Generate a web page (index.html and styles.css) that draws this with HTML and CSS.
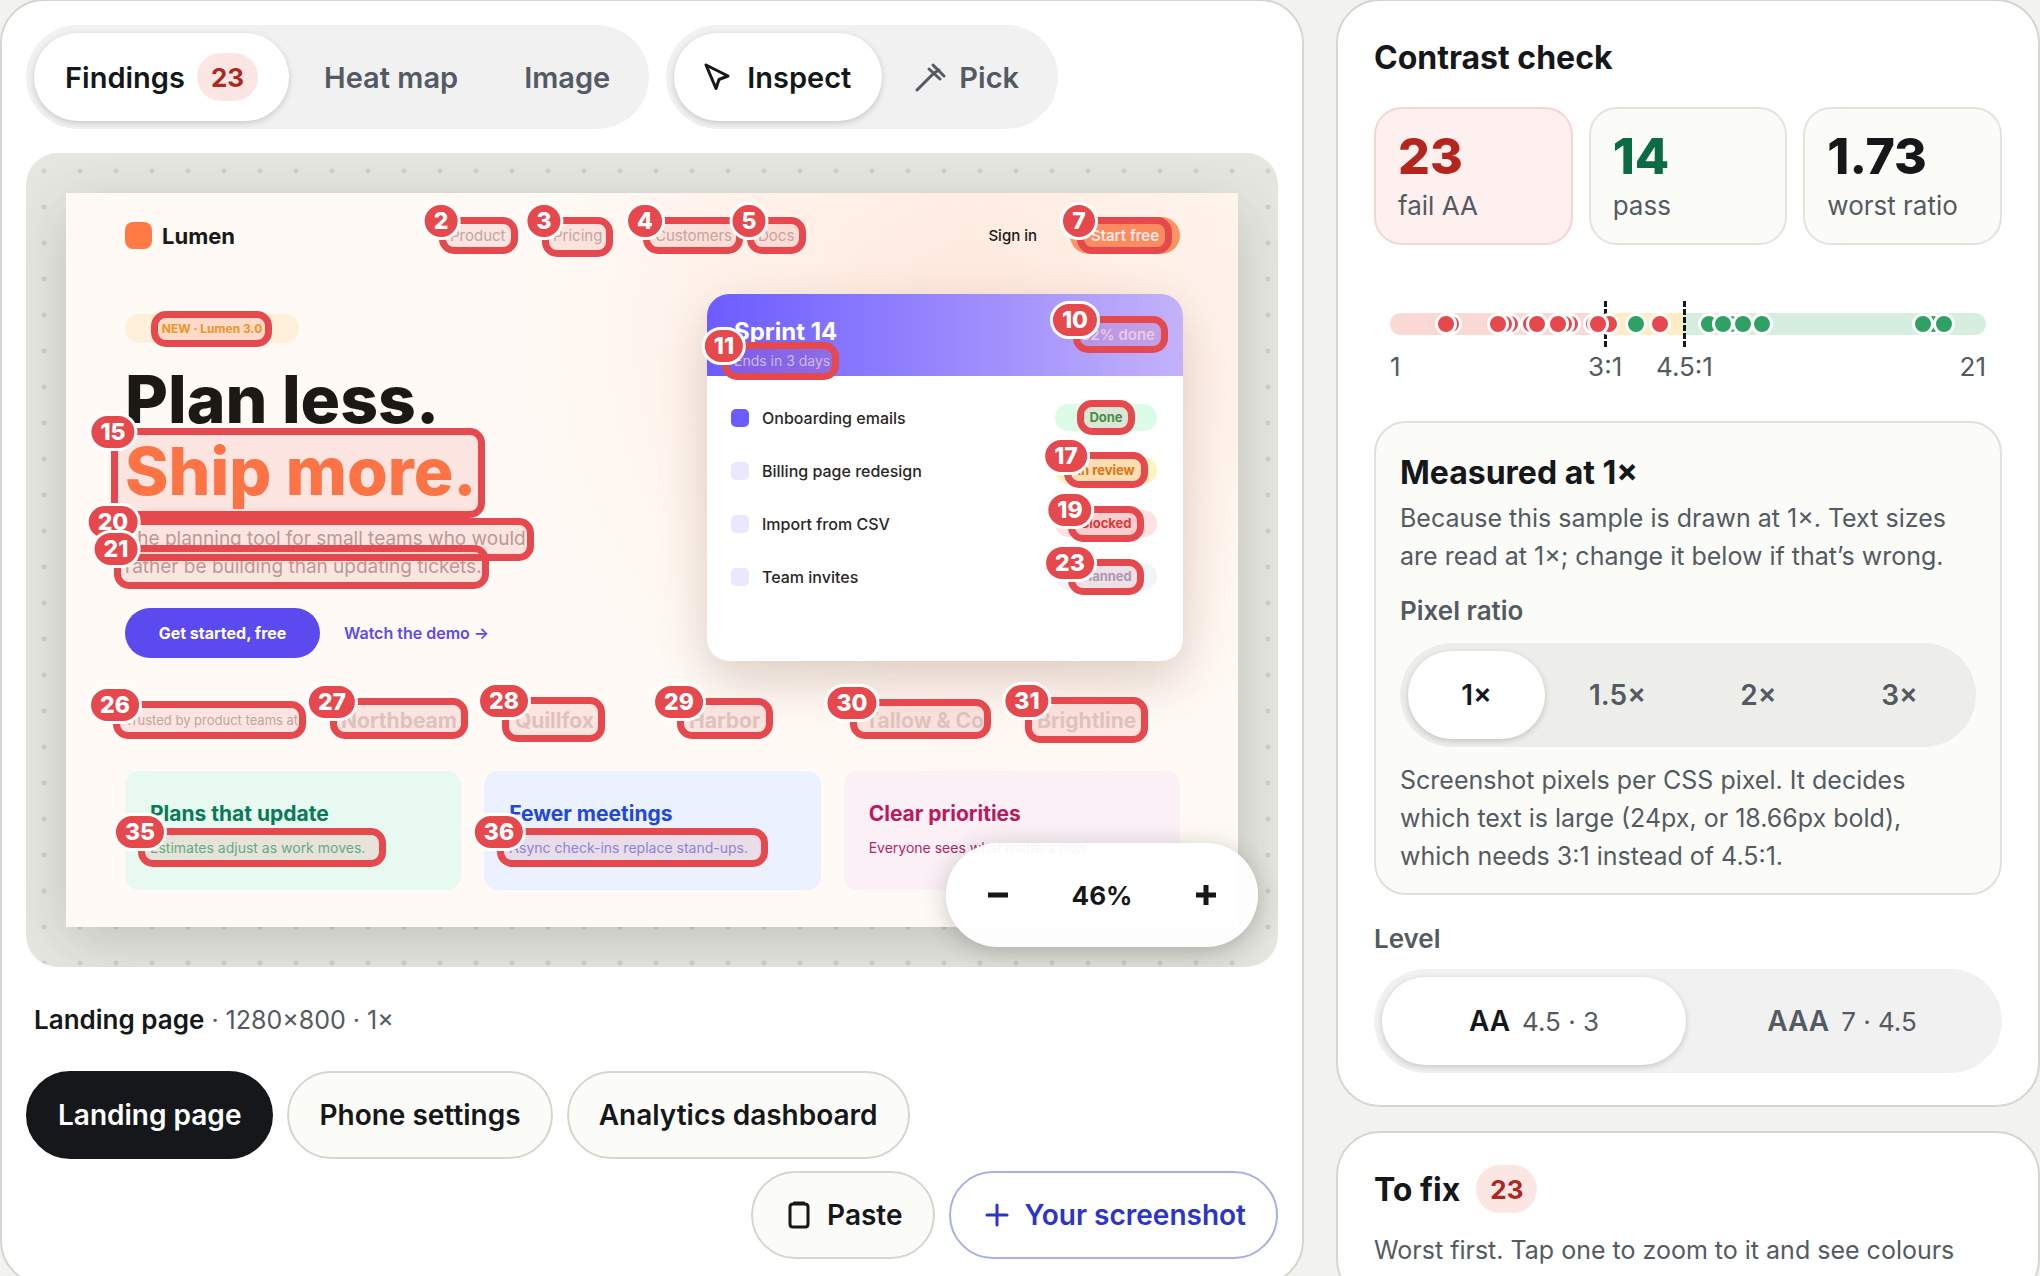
FILE: index.html
```html
<!DOCTYPE html>
<html lang="en">
<head>
    <meta charset="UTF-8">
    <meta name="viewport" content="width=device-width, initial-scale=1.0">
    <title>Contrast check</title>
    <link rel="stylesheet" href="styles.css">
</head>
<body>
    <main class="layout">
        <section class="card viewer">
            <div class="toolbar">
                <div class="segmented">
                    <button class="active">Findings <span class="count">23</span></button>
                    <button>Heat map</button>
                    <button>Image</button>
                </div>
                <div class="segmented">
                    <button class="active">
                        <svg class="icon" viewBox="0 0 26 26"><path d="M1 1 L23 12 L14 15.500 L11 24.500 Z"/></svg>
                        Inspect
                    </button>
                    <button>
                        <svg class="icon" viewBox="0 0 26 26"><path d="M0 26 L17 9 M12 5 L23 15 M16 1 L27 12 M17 9 L22 6"/></svg>
                        Pick
                    </button>
                </div>
            </div>

            <div class="stage">
                <div class="sample">
                    <div class="site-nav">
                        <div class="brand"><span class="brand-mark"></span>Lumen</div>
                        <div class="site-links">
                            <a href="#">Product</a>
                            <a href="#">Pricing</a>
                            <a href="#">Customers</a>
                            <a href="#">Docs</a>
                        </div>
                        <div class="site-account">
                            <a href="#" class="sign-in">Sign in</a>
                            <button class="start">Start free</button>
                        </div>
                    </div>

                    <div class="hero">
                        <div class="hero-text">
                            <span class="new-pill">NEW · Lumen 3.0</span>
                            <h2 class="headline">Plan less.<br><span>Ship more.</span></h2>
                            <p class="lead">The planning tool for small teams who would rather be building than updating tickets.</p>
                            <div class="hero-actions">
                                <button class="get-started">Get started, free</button>
                                <a href="#">Watch the demo →</a>
                            </div>
                        </div>
                        <div class="sprint">
                            <div class="sprint-head">
                                <div>
                                    <strong>Sprint 14</strong>
                                    <small>Ends in 3 days</small>
                                </div>
                                <span class="progress">32% done</span>
                            </div>
                            <ul class="tasks">
                                <li><i class="box checked"></i>Onboarding emails<span class="status done">Done</span></li>
                                <li><i class="box"></i>Billing page redesign<span class="status review">In review</span></li>
                                <li><i class="box"></i>Import from CSV<span class="status blocked">Blocked</span></li>
                                <li><i class="box"></i>Team invites<span class="status planned">Planned</span></li>
                            </ul>
                        </div>
                    </div>

                    <div class="logos">
                        <span class="trusted">Trusted by product teams at</span>
                        <b>Northbeam</b>
                        <b>Quillfox</b>
                        <b>Harbor</b>
                        <b>Tallow &amp; Co</b>
                        <b>Brightline</b>
                    </div>

                    <div class="features">
                        <div class="feature green"><h3>Plans that update</h3><p>Estimates adjust as work moves.</p></div>
                        <div class="feature blue"><h3>Fewer meetings</h3><p>Async check-ins replace stand-ups.</p></div>
                        <div class="feature pink"><h3>Clear priorities</h3><p>Everyone sees what matters now.</p></div>
                    </div>

                    <div class="findings" id="findings"></div>
                </div>

                <div class="zoom">
                    <button aria-label="Zoom out"><svg viewBox="0 0 24 24"><path d="M2 12 H22"/></svg></button>
                    <output>46%</output>
                    <button aria-label="Zoom in"><svg viewBox="0 0 24 24"><path d="M2 12 H22 M12 2 V22"/></svg></button>
                </div>
            </div>

            <p class="caption"><strong>Landing page</strong> · 1280×800 · 1×</p>

            <div class="samples">
                <button class="chip selected">Landing page</button>
                <button class="chip">Phone settings</button>
                <button class="chip">Analytics dashboard</button>
                <div class="sources">
                    <button class="chip">
                        <svg class="icon" viewBox="0 0 32 32"><path d="M10 5 H22 Q25 5 25 8 V25 Q25 28 22 28 H10 Q7 28 7 25 V8 Q7 5 10 5 M11 4 H21"/></svg>
                        Paste
                    </button>
                    <button class="chip add">
                        <svg class="icon" viewBox="0 0 32 32"><path d="M6 16 H26 M16 6 V26"/></svg>
                        Your screenshot
                    </button>
                </div>
            </div>
        </section>

        <aside class="side">
            <section class="card panel">
                <h1>Contrast check</h1>
                <div class="stats">
                    <div class="stat fail"><strong>23</strong><span>fail AA</span></div>
                    <div class="stat pass"><strong>14</strong><span>pass</span></div>
                    <div class="stat"><strong>1.73</strong><span>worst ratio</span></div>
                </div>

                <div class="scale">
                    <div class="track" id="track">
                        <span class="zone low"></span><span class="zone mid"></span><span class="zone high"></span>
                        <span class="tick large"></span>
                        <span class="tick normal"></span>
                    </div>
                    <div class="scale-labels">
                        <span>1</span><span class="at-large">3:1</span><span class="at-normal">4.5:1</span><span>21</span>
                    </div>
                </div>

                <div class="measured">
                    <h2>Measured at 1×</h2>
                    <p>Because this sample is drawn at 1×. Text sizes are read at 1×; change it below if that’s wrong.</p>
                    <h3>Pixel ratio</h3>
                    <div class="segmented equal">
                        <button class="active">1×</button>
                        <button>1.5×</button>
                        <button>2×</button>
                        <button>3×</button>
                    </div>
                    <p>Screenshot pixels per CSS pixel. It decides which text is large (24px, or 18.66px bold), which needs 3:1 instead of 4.5:1.</p>
                </div>

                <h3>Level</h3>
                <div class="segmented equal">
                    <button class="active">AA <small>4.5 · 3</small></button>
                    <button>AAA <small>7 · 4.5</small></button>
                </div>
            </section>

            <section class="card panel">
                <h1>To fix <span class="count">23</span></h1>
                <p>Worst first. Tap one to zoom to it and see colours</p>
            </section>
        </aside>
    </main>

    <script src="script.js"></script>
</body>
</html>
```

FILE: styles.css
```css
* {
    box-sizing: border-box;
}

body {
    margin: 0;
    height: 100vh;
    overflow: hidden;
    background: #f2f3ee;
    color: #15171a;
    font-family: Inter, "Liberation Sans", sans-serif;
    font-size: 26px;
}

h1, h2, h3, p, ul {
    margin: 0;
    padding: 0;
}

button {
    font: inherit;
    color: inherit;
    border: none;
    background: none;
    padding: 0;
    cursor: pointer;
}

a {
    color: inherit;
    text-decoration: none;
}

.layout {
    display: grid;
    grid-template-columns: minmax(0, 1304fr) minmax(0, 704fr);
    gap: 32px;
    align-items: start;
    margin-top: -1px;
}

.card {
    background: white;
    border: 2px solid #d5d6cf;
    border-radius: 44px;
}

.viewer {
    padding: 24px;
}

.side {
    display: flex;
    flex-direction: column;
    gap: 24px;
}

/* segmented controls */
.toolbar {
    display: flex;
    gap: 17px;
}

.segmented {
    display: flex;
    gap: 4px;
    padding: 8px;
    border-radius: 52px;
    background: rgba(20, 20, 20, 0.06);
}

.segmented button {
    display: flex;
    align-items: center;
    justify-content: center;
    gap: 12px;
    height: 88px;
    padding: 0 31px;
    border-radius: 44px;
    color: #545a62;
    font-size: 29px;
    font-weight: 600;
}

.segmented .active {
    background: white;
    color: #15171a;
    box-shadow: 0 2px 6px rgba(0, 0, 0, 0.18);
}

.segmented small {
    font-size: 26px;
    font-weight: 400;
    color: #545a62;
}

.segmented.equal button {
    flex: 1;
    padding: 0;
    font-size: 28px;
}

.count {
    display: inline-flex;
    align-items: center;
    height: 48px;
    padding: 0 14px;
    border-radius: 24px;
    background: #fce6e3;
    color: #ad2820;
    font-size: 26px;
    font-weight: 700;
}

.icon {
    width: 32px;
    height: 32px;
    overflow: visible;
    fill: none;
    stroke: currentColor;
    stroke-width: 3;
    stroke-linecap: round;
    stroke-linejoin: round;
}

.segmented .icon {
    width: 26px;
    height: 26px;
    margin-right: 4px;
}

/* stage */
.stage {
    position: relative;
    margin-top: 24px;
    padding: 40px;
    border-radius: 32px;
    overflow: hidden;
    background: #e6e7e1 radial-gradient(circle, #cfd1ca 2px, transparent 3px) 0 0 / 36px 36px;
}

.sample {
    position: relative;
    display: flex;
    flex-direction: column;
    height: 734px;
    padding: 24px 58px 0 59px;
    background: radial-gradient(circle at 77% 20%, #ffe8dc 0, #fffaf5 42%);
    box-shadow: 0 14px 56px rgba(40, 50, 30, 0.2);
    color: #1c1815;
    font-size: 16px;
}

.site-nav {
    display: grid;
    grid-template-columns: 325px 1fr auto;
    align-items: center;
    height: 37px;
    font-size: 15px;
}

.brand {
    display: flex;
    align-items: center;
    gap: 10px;
    font-size: 22px;
    font-weight: 700;
}

.brand-mark {
    width: 27px;
    height: 27px;
    border-radius: 8px;
    background: #ff7a45;
}

.site-links {
    display: grid;
    grid-template-columns: 103px 102px 103px 1fr;
    color: #bdb3ad;
}

.site-account {
    display: flex;
    align-items: center;
    gap: 33px;
    font-weight: 600;
}

.sign-in {
    font-weight: 500;
}

.start {
    width: 110px;
    height: 37px;
    border-radius: 19px;
    background: #ff9462;
    color: white;
}

.hero {
    display: flex;
    justify-content: space-between;
    margin-top: 40px;
    margin-right: -3px;
}

.hero-text {
    padding-top: 20px;
}

.new-pill {
    display: flex;
    align-items: center;
    justify-content: center;
    width: 174px;
    height: 29px;
    border-radius: 15px;
    background: #fff0dc;
    color: #f59e1b;
    font-size: 12px;
    font-weight: 700;
}

.headline {
    margin-top: 20px;
    font-size: 66px;
    line-height: 72px;
    font-weight: 800;
}

.headline span {
    color: #ff7a45;
}

.lead {
    width: 420px;
    margin-top: 18px;
    color: #b3a69f;
    font-size: 19px;
    line-height: 28px;
}

.hero-actions {
    display: flex;
    align-items: center;
    gap: 24px;
    margin-top: 27px;
    font-weight: 600;
    color: #5b4aee;
}

.get-started {
    width: 195px;
    height: 50px;
    border-radius: 25px;
    background: #5b4aee;
    color: white;
    font-weight: 700;
}

.sprint {
    width: 476px;
    height: 367px;
    border-radius: 22px;
    overflow: hidden;
    background: white;
    box-shadow: 0 18px 50px rgba(80, 40, 20, 0.2);
}

.sprint-head {
    display: flex;
    justify-content: space-between;
    height: 82px;
    padding: 24px 28px 0 27px;
    background: linear-gradient(90deg, #6c5cff, #c3b2fa);
    color: white;
}

.sprint-head strong {
    display: block;
    font-size: 24px;
    line-height: 28px;
}

.sprint-head small {
    display: block;
    font-size: 14px;
    line-height: 30px;
    color: #d0c8fb;
}

.progress {
    padding-top: 7px;
    font-size: 15px;
    line-height: 20px;
    font-weight: 600;
    color: #e6defc;
}

.tasks {
    padding: 15px 26px 0 24px;
    list-style: none;
}

.tasks li {
    display: flex;
    align-items: center;
    height: 53px;
    color: #2a2725;
    font-weight: 500;
}

.box {
    width: 18px;
    height: 18px;
    margin-right: 13px;
    border-radius: 5px;
    background: #ebe7ff;
}

.box.checked {
    background: #6c5cff;
}

.status {
    width: 102px;
    height: 27px;
    margin-left: auto;
    border-radius: 14px;
    text-align: center;
    font-size: 13px;
    line-height: 27px;
    font-weight: 700;
}

.done { background: #dcfce7; color: #2c9a4b; }
.review { background: #fef3c0; color: #d97b0c; }
.blocked { background: #fee2e2; color: #dc3535; }
.planned { background: #f1f5fb; color: #a3a5bb; }

.logos {
    display: grid;
    grid-template-columns: 216px 174px 174px 176px 172px 1fr;
    align-items: center;
    height: 40px;
    margin-top: 39px;
    color: #ddd3cd;
}

.logos b {
    font-size: 21px;
}

.trusted {
    font-size: 13px;
    color: #bdb1aa;
}

.features {
    display: flex;
    gap: 23px;
    margin-top: 31px;
}

.feature {
    flex: 1;
    height: 119px;
    padding: 30px 25px;
    border-radius: 14px;
}

.feature h3 {
    font-size: 21px;
    line-height: 26px;
    font-weight: 700;
}

.feature p {
    margin-top: 10px;
    font-size: 14px;
    line-height: 22px;
}

.green { background: #e7f9f0; color: #087a55; }
.green p { color: #4fb989; }
.blue { background: #ebf1ff; color: #2148d8; }
.blue p { color: #7d8fe8; }
.pink { background: #fcf0f7; color: #be185d; }
.pink p { color: #ad2868; }

/* finding boxes over the sample */
.finding {
    position: absolute;
    border: 7px solid #e5484d;
    border-radius: 15px;
    background: rgba(229, 72, 77, 0.12);
}

.finding b {
    position: absolute;
    top: -3px;
    left: -5px;
    transform: translate(-50%, -50%);
    min-width: 38px;
    height: 38px;
    padding: 0 9px;
    border: 3px solid white;
    border-radius: 19px;
    background: #e5484d;
    color: white;
    font-size: 23px;
    font-weight: 800;
    line-height: 32px;
    text-align: center;
}

.zoom {
    position: absolute;
    right: 20px;
    bottom: 20px;
    display: flex;
    align-items: center;
    justify-content: space-between;
    width: 312px;
    height: 104px;
    padding: 8px;
    border-radius: 52px;
    background: rgba(255, 255, 255, 0.95);
    box-shadow: 0 4px 24px rgba(40, 50, 40, 0.25);
    font-weight: 700;
}

.zoom button {
    display: flex;
    align-items: center;
    justify-content: center;
    width: 88px;
    height: 88px;
}

.zoom svg {
    width: 24px;
    height: 24px;
    stroke: #15171a;
    stroke-width: 5;
}

.caption {
    margin-top: 35px;
    padding-left: 8px;
    font-size: 25px;
    line-height: 36px;
    color: #545a62;
}

.caption strong {
    font-size: 26px;
    font-weight: 600;
    color: #15171a;
}

.samples {
    display: flex;
    flex-wrap: wrap;
    gap: 12px 14px;
    margin-top: 33px;
}

.chip {
    display: flex;
    align-items: center;
    gap: 12px;
    height: 88px;
    padding: 0 30px;
    border: 2px solid #d5d6cf;
    border-radius: 44px;
    background: #fbfcf8;
    font-size: 28px;
    font-weight: 600;
}

.chip.selected {
    background: #15171a;
    border-color: #15171a;
    color: white;
}

.chip.add {
    background: white;
    border-color: #a9afe9;
    color: #2b35c8;
}

.sources {
    display: flex;
    justify-content: flex-end;
    gap: 14px;
    width: 100%;
}

/* side panels */
.panel {
    padding: 32px 36px;
}

.panel h1 {
    display: flex;
    align-items: center;
    gap: 16px;
    min-height: 48px;
    font-size: 32px;
    font-weight: 700;
}

.panel h3 {
    color: #545a62;
    font-size: 26px;
    line-height: 36px;
    font-weight: 600;
}

.panel p {
    color: #545a62;
    font-size: 25px;
    line-height: 38px;
}

.panel > p {
    margin-top: 18px;
}

.panel > h3 {
    margin-top: 26px;
    margin-bottom: 12px;
}

.stats {
    display: grid;
    grid-template-columns: repeat(3, 1fr);
    gap: 16px;
    margin-top: 26px;
}

.stat {
    height: 138px;
    padding: 17px 22px;
    border: 2px solid #e3e4de;
    border-radius: 28px;
    background: #fbfcf8;
}

.stat strong {
    display: block;
    font-size: 50px;
    line-height: 60px;
    font-weight: 800;
}

.stat span {
    display: block;
    line-height: 40px;
    color: #545a62;
}

.fail { background: #fdf0ee; border-color: #f3d5d1; }
.fail strong { color: #b3261e; }
.pass strong { color: #0b6b45; }

.scale {
    margin: 68px 16px 0;
}

.track {
    position: relative;
    display: grid;
    grid-template-columns: 215fr 79fr 302fr;
    height: 22px;
}

.low { background: #fad9d5; border-radius: 11px 0 0 11px; }
.mid { background: #fdecc4; }
.high { background: #d6eee0; border-radius: 0 11px 11px 0; }

.tick {
    position: absolute;
    top: -12px;
    height: 46px;
    margin-left: -1px;
    border-left: 3px dashed #15171a;
}

.tick.large { left: 36.1%; }
.tick.normal { left: 49.4%; }

.dot {
    position: absolute;
    top: 0;
    width: 22px;
    height: 22px;
    margin-left: -10px;
    border: 3px solid white;
    border-radius: 50%;
    background: #e5484d;
}

.dot.ok {
    background: #30a165;
}

.scale-labels {
    position: relative;
    display: flex;
    justify-content: space-between;
    margin-top: 13px;
    line-height: 38px;
    color: #545a62;
}

.at-large, .at-normal {
    position: absolute;
    left: 36.1%;
    transform: translateX(-50%);
}

.at-normal {
    left: 49.4%;
}

.measured {
    margin-top: 35px;
    padding: 24px;
    padding-bottom: 18px;
    border: 2px solid #e0e1db;
    border-radius: 32px;
    background: #fbfcf8;
}

.measured h2 {
    font-size: 32px;
    line-height: 52px;
}

.measured h3 {
    margin-top: 18px;
    margin-bottom: 14px;
}

.measured .segmented {
    margin-bottom: 14px;
}
```

FILE: script.js
```js
// [number, left, top, width, height], number 0 means the badge is hidden
const findings = [
    [2, 373, 24, 79, 37],
    [3, 476, 24, 71, 40],
    [4, 577, 24, 100, 37],
    [5, 681, 24, 59, 37],
    [7, 1011, 24, 95, 37],
    [10, 1007, 123, 95, 37],
    [11, 656, 149, 117, 38],
    [0, 85, 118, 121, 36],
    [15, 45, 235, 374, 90],
    [0, 1011, 207, 58, 35],
    [17, 998, 259, 84, 36],
    [19, 1002, 313, 76, 36],
    [20, 45, 325, 423, 43],
    [21, 48, 352, 375, 44],
    [23, 1002, 366, 76, 36],
    [26, 47, 508, 193, 38],
    [27, 264, 505, 138, 41],
    [28, 436, 504, 103, 45],
    [29, 611, 505, 96, 41],
    [30, 784, 506, 141, 40],
    [31, 959, 504, 123, 46],
    [35, 72, 635, 248, 39],
    [36, 431, 635, 271, 39]
];

const layer = document.getElementById('findings');

findings.forEach(([number, left, top, width, height]) => {
    const box = document.createElement('div');
    box.className = 'finding';
    box.style.cssText = `left:${left}px;top:${top}px;width:${width}px;height:${height}px`;
    if (number) {
        const badge = document.createElement('b');
        badge.textContent = number;
        box.appendChild(badge);
    }
    layer.appendChild(box);
});

// positions along the track, in percent
const failing = [10, 9.2, 20, 19, 18, 23.5, 24.5, 30, 29, 28, 34, 36.6, 34.8, 45.1];
const passing = [41.1, 53.4, 57, 55.7, 59.1, 62.2, 91, 89.2, 92.8];
const track = document.getElementById('track');

function addDots(positions, className) {
    positions.forEach((position) => {
        const dot = document.createElement('span');
        dot.className = className;
        dot.style.left = `${position}%`;
        track.appendChild(dot);
    });
}

addDots(failing, 'dot');
addDots(passing, 'dot ok');
```
